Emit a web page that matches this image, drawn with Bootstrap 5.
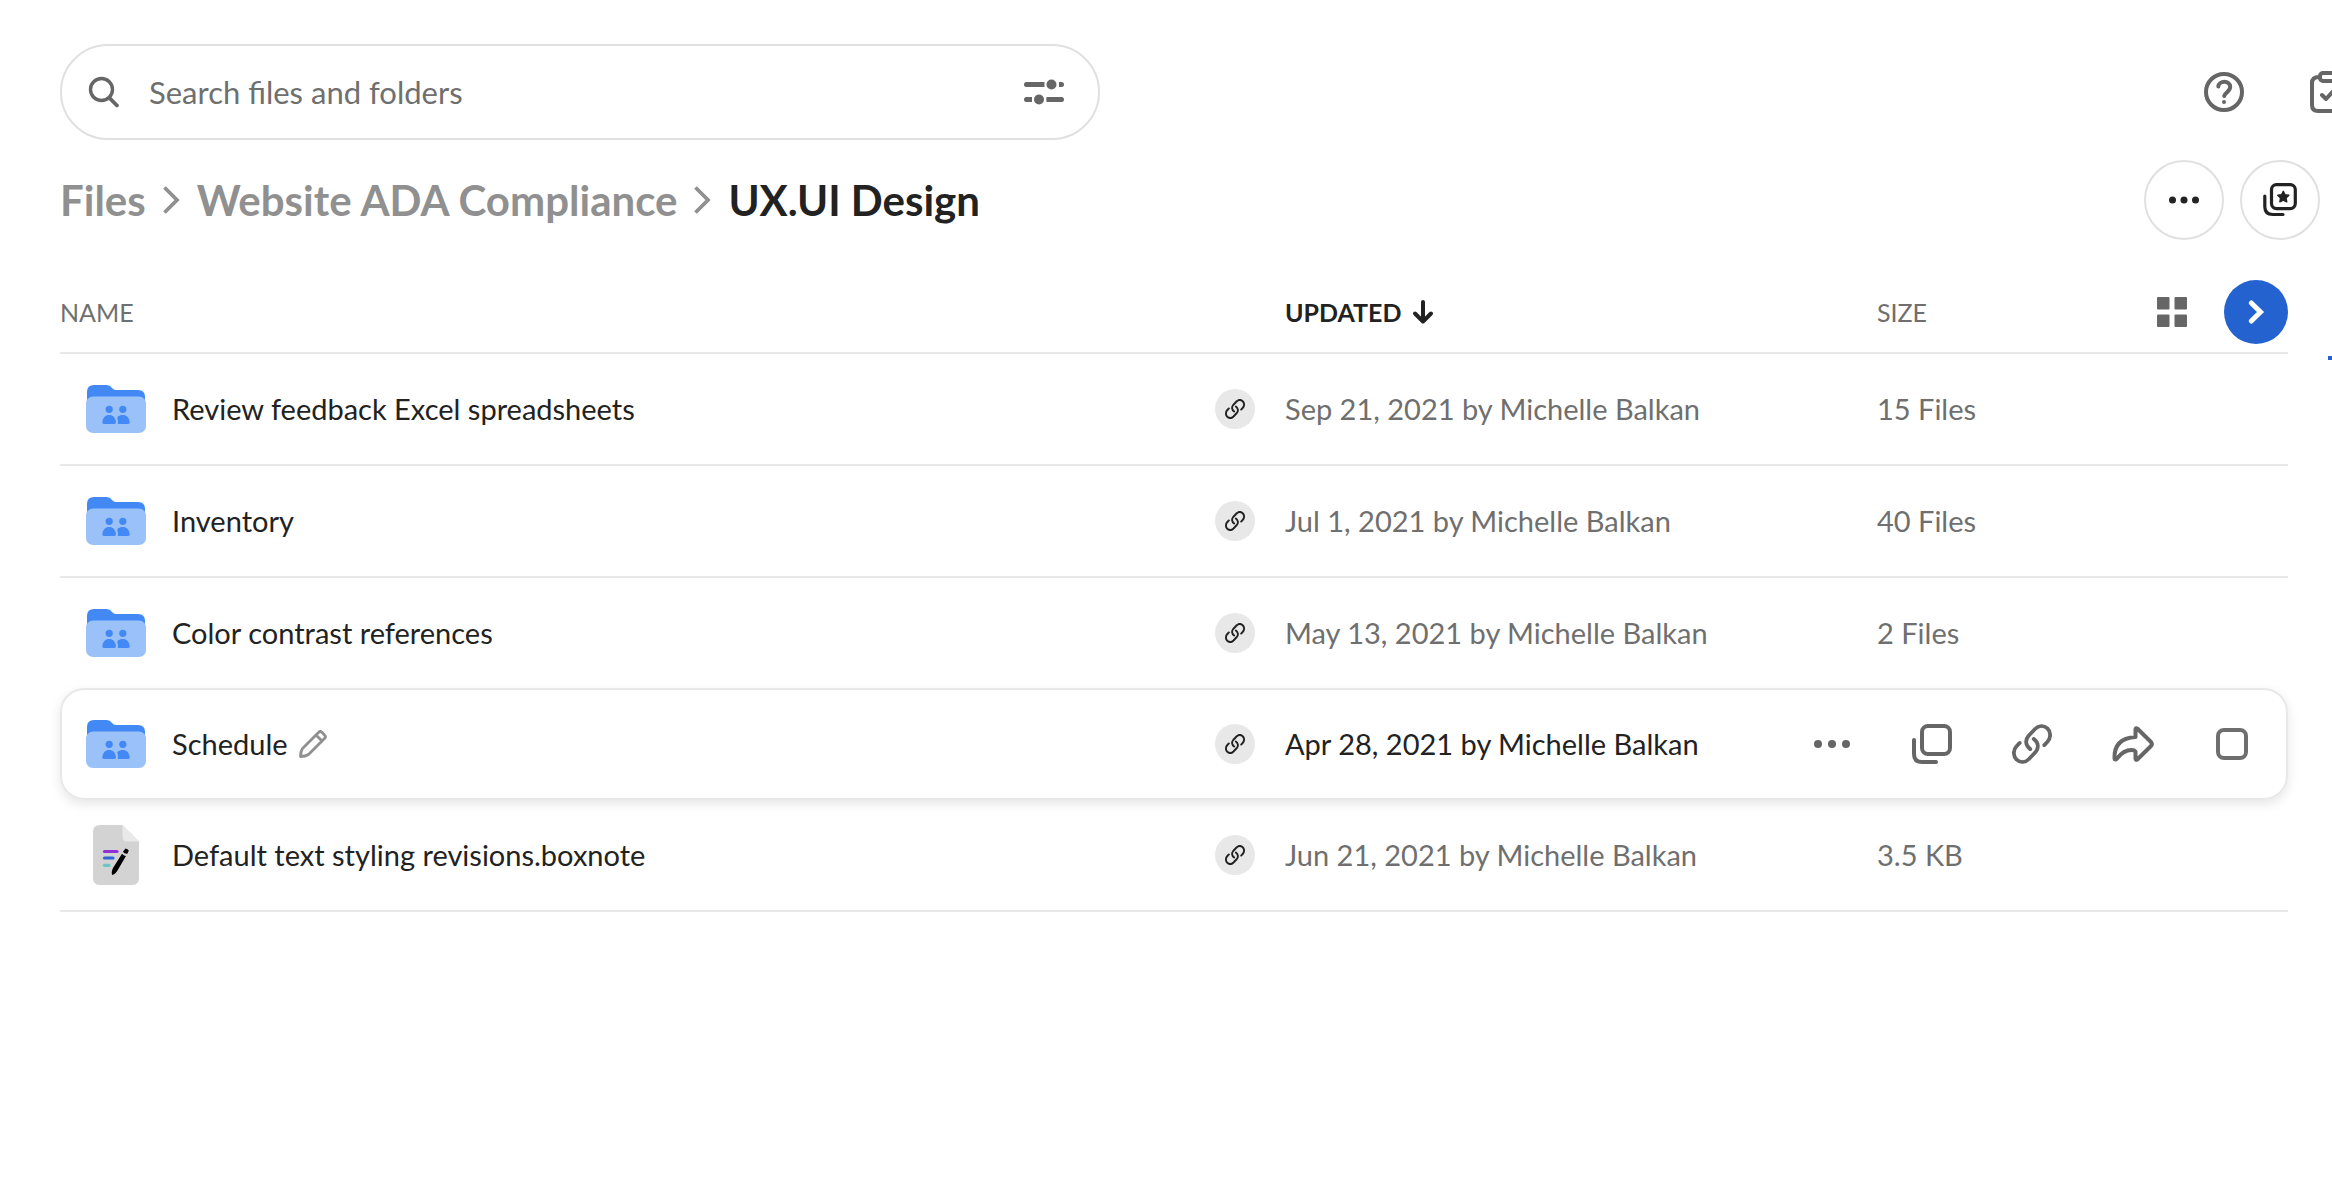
<!DOCTYPE html>
<html lang="en">
<head>
<meta charset="utf-8">
<meta name="viewport" content="width=device-width, initial-scale=1">
<title>UX.UI Design</title>
<link href="https://cdn.jsdelivr.net/npm/bootstrap@5.3.0/dist/css/bootstrap.min.css" rel="stylesheet">
<style>
  :root { --ink: #222; --muted: #6f6f6f; --soft: #909090; --line: #e8e8e8; --brand: #2462cf; }
  body { font-family: Lato, "Liberation Sans", sans-serif; font-size: 29px; line-height: 36px; color: var(--ink); }
  svg { display: block; flex: none; overflow: visible; }
  .btn { --bs-btn-padding-x: 0; --bs-btn-padding-y: 0; --bs-btn-border-width: 0; flex: none; line-height: 1; }
  .app-shell { min-height: 100vh; padding: 44px 44px 0 60px; }
  .search-box { width: 1040px; max-width: 80%; height: 96px; padding: 0 34px 0 27px; gap: 30px; border: 2px solid #e0e0e0; color: #666; }
  .search-box input { font-size: 31px; color: var(--muted); min-width: 0; }
  .search-box input::placeholder { color: var(--muted); opacity: 1; }
  .global-tools { gap: 66px; margin-right: -62px; color: #666; }
  .path-bar { margin: 20px -32px 32px 0; min-height: 80px; }
  .breadcrumb { --bs-breadcrumb-font-size: 42px; font-weight: 700; line-height: 48px; gap: 17px; }
  .breadcrumb a { color: var(--soft); }
  .round-btn { width: 80px; height: 80px; border: 2px solid #e0e0e0; color: var(--ink); }
  .file-table { width: 100%; table-layout: fixed; border-collapse: separate; border-spacing: 0; }
  .file-table th, .file-table td { padding: 0; vertical-align: middle; border-bottom: 2px solid var(--line); }
  .file-table th { height: 82px; font-size: 25px; font-weight: 400; color: var(--muted); }
  .file-table td { height: 112px; color: var(--muted); }
  .file-table a { color: var(--ink); }
  .before-active td { height: 110px; border-bottom: 0; }
  .col-link { width: 86px; } .col-date { width: 494px; } .col-gap { width: 98px; } .col-size { width: 411px; }
  .sort-btn { --bs-btn-font-size: 25px; --bs-btn-font-weight: 700; --bs-btn-color: var(--ink); gap: 12px; }
  .name-cell { padding-left: 26px; gap: 26px; }
  .name-edit { gap: 10px; }
  .icon-slot { width: 60px; }
  .link-dot { width: 40px; height: 40px; margin-left: 16px; background: #e8e8e8; color: var(--ink); }
  .is-active { border-radius: 24px; box-shadow: 0 4px 12px rgba(0, 0, 0, .1); }
  .is-active td { border-top: 2px solid var(--line); color: var(--ink); }
  .is-active td:first-child { border-left: 2px solid var(--line); border-radius: 24px 0 0 24px; }
  .is-active td:last-child { border-right: 2px solid var(--line); border-radius: 0 24px 24px 0; }
  .is-active .name-cell { padding-left: 24px; }
  .row-tools { gap: 60px; padding-right: 38px; color: #666; }
  .row-tools input { appearance: none; width: 32px; height: 32px; margin: 0 0 0 4px; border: 4px solid #6f6f6f; border-radius: 8px; background: #fff; }
  .tool-gap { gap: 37px; }
  .go-btn { width: 64px; height: 64px; background: var(--brand); color: #fff; }
  .panel-edge { top: 356px; right: 0; width: 4px; height: 4px; background: var(--brand); }
</style>
<script src="https://cdn.jsdelivr.net/npm/bootstrap@5.3.0/dist/js/bootstrap.bundle.min.js"></script>
</head>
<body class="bg-white">
<svg class="d-none" aria-hidden="true">
  <symbol id="i-folder" viewBox="0 0 60 48">
    <path fill="#4289f5" d="M1 20V7q0-7 7-7h12q4 0 6 3 1.500 2 4 2h22q7 0 7 7v8z"/>
    <rect y="11.500" width="60" height="36.500" rx="7" fill="#9bc1f9"/>
    <g fill="#4289f5"><circle cx="23.200" cy="24.300" r="3.600"/><circle cx="36.800" cy="24.300" r="3.600"/>
    <path d="M16.300 37C17 32.500 19.500 30 23.200 30S29.300 32.500 30 37q.2 2-1.800 2H18q-2 0-1.700-2zM31.500 31.800C33 30.500 35 30 36.800 30c3.700 0 6.200 2.500 6.900 7q.3 2-1.700 2H32.500q-.8 0-.7-1c.2-2.500.2-3-.6-5z"/></g>
  </symbol>
  <symbol id="i-link" viewBox="0 0 40 40">
    <g fill="none" stroke="currentColor" stroke-width="3.800" stroke-linecap="round">
      <path d="M7.700 18.900 4.700 22C.9 26 1 32.200 4.600 35.600 8.500 39 13.500 38.500 17 35L23.600 28C27 24 26.600 18.500 21.700 14.900"/>
      <path d="M32.300 21.100 35.300 18C39.100 14 39 7.800 35.400 4.400 31.500 1 26.500 1.500 23 5L16.400 12C13 16 13.400 21.500 18.300 25.100"/>
    </g>
  </symbol>
  <symbol id="i-chevron" viewBox="0 0 17 28"><path d="M1.500 1.500 14 14 1.500 26.500" fill="none" stroke="#909090" stroke-width="3.800"/></symbol>
</svg>

<div class="app-shell position-relative overflow-hidden">
  <header class="d-flex align-items-center justify-content-between">
    <form class="search-box d-flex align-items-center rounded-pill" role="search">
      <label for="q" aria-label="Search">
        <svg width="30" height="30" viewBox="0 0 30 30" fill="none" stroke="currentColor"><circle cx="12.500" cy="12.500" r="11" stroke-width="3.400"/><path d="m20.500 21 7.500 7.500" stroke-width="3.800" stroke-linecap="round"/></svg>
      </label>
      <input id="q" class="border-0 bg-transparent p-0 flex-grow-1" type="text" placeholder="Search files and folders">
      <button class="btn" type="button" aria-label="Filters">
        <svg width="40" height="26" viewBox="0 0 40 26" fill="#666"><path stroke="#666" stroke-width="5" stroke-linecap="round" d="M2.500 5.500h15M37.500 5.500h0M2.500 20.500h3M25 20.500h12.500"/><path d="M17 3h3.500v5H17zM35 3h2v5h-2zM5 18h3v5H5zM22.500 18h3v5h-3z"/><circle cx="27.500" cy="5.500" r="5"/><circle cx="15" cy="20.500" r="5"/></svg>
      </button>
    </form>
    <div class="global-tools d-flex">
      <button class="btn text-reset" type="button" aria-label="Help">
        <svg width="40" height="40" viewBox="0 0 40 40" fill="none" stroke="currentColor" stroke-width="4" stroke-linecap="round"><circle cx="20" cy="20" r="18"/><path d="M14.300 14.500c.4-6 11.900-6.500 11.900.3 0 4.700-5 5.500-6 9.200"/><circle cx="20" cy="30" r="2" fill="currentColor" stroke="none"/></svg>
      </button>
      <button class="btn text-reset" type="button" aria-label="Tasks">
        <svg width="40" height="42" viewBox="0 0 40 42" fill="none" stroke="currentColor" stroke-width="4" stroke-linecap="round" stroke-linejoin="round"><path d="M9 6q-7 0-7 6v22q0 6 6 6h24q6 0 6-6V12q0-6-7-6"/><rect x="10" y="2" width="20" height="8" rx="3"/><path d="m12 24 4 4 11-12"/></svg>
      </button>
    </div>
  </header>

  <div class="path-bar d-flex align-items-center justify-content-between">
    <nav aria-label="Breadcrumb">
      <ol class="breadcrumb align-items-center mb-0">
        <li><a class="text-decoration-none" href="#">Files</a></li>
        <li aria-hidden="true"><svg width="17" height="28"><use href="#i-chevron"/></svg></li>
        <li><a class="text-decoration-none" href="#">Website ADA Compliance</a></li>
        <li aria-hidden="true"><svg width="17" height="28"><use href="#i-chevron"/></svg></li>
        <li aria-current="page">UX.UI Design</li>
      </ol>
    </nav>
    <div class="d-flex gap-3">
      <button class="btn round-btn rounded-circle d-flex align-items-center justify-content-center" type="button" aria-label="More options">
        <svg width="30" height="8" viewBox="0 0 30 8" fill="currentColor"><circle cx="3.500" cy="4" r="3.500"/><circle cx="15" cy="4" r="3.500"/><circle cx="26.500" cy="4" r="3.500"/></svg>
      </button>
      <button class="btn round-btn rounded-circle d-flex align-items-center justify-content-center" type="button" aria-label="Add to collections">
        <svg width="34" height="34" viewBox="0 0 34 34" fill="none" stroke="currentColor" stroke-width="3.200" stroke-linecap="round"><rect x="8.500" y="1.600" width="23.800" height="24" rx="5"/><path d="M1.800 13v10.500q0 8 8 8H20"/><path d="m20.300 8.300 1.700 3.500 3.800.5-2.800 2.700.7 3.800-3.400-1.800-3.400 1.800.7-3.800-2.800-2.700 3.800-.5z" fill="currentColor" stroke-width="1.500" stroke-linejoin="round"/></svg>
      </button>
    </div>
  </div>

  <table class="file-table">
    <colgroup><col><col class="col-link"><col class="col-date"><col class="col-gap"><col class="col-size"></colgroup>
    <thead>
      <tr>
        <th scope="col" colspan="2">NAME</th>
        <th scope="col" colspan="2" aria-sort="descending">
          <button class="btn sort-btn d-flex align-items-center" type="button">
            UPDATED
            <svg width="20" height="24" viewBox="0 0 20 24" fill="none" stroke="#222" stroke-width="4" stroke-linecap="round" stroke-linejoin="round"><path d="M10 2v19M2 13.500l8 8 8-8"/></svg>
          </button>
        </th>
        <th scope="col">
          <div class="d-flex align-items-center tool-gap">
            <span class="me-auto">SIZE</span>
            <button class="btn" type="button" aria-label="Grid view"><svg width="30" height="30" viewBox="0 0 30 30" fill="#666"><rect width="12.500" height="12.500" rx="1"/><rect x="17.500" width="12.500" height="12.500" rx="1"/><rect y="17.500" width="12.500" height="12.500" rx="1"/><rect x="17.500" y="17.500" width="12.500" height="12.500" rx="1"/></svg></button>
            <button class="btn go-btn rounded-circle d-flex align-items-center justify-content-center" type="button" aria-label="Show sidebar"><svg width="16" height="24" viewBox="0 0 16 24"><path d="M3.300 3 12.500 12 3.300 21" fill="none" stroke="currentColor" stroke-width="5" stroke-linecap="round"/></svg></button>
          </div>
        </th>
      </tr>
    </thead>
    <tbody>
      <tr>
        <td><div class="name-cell d-flex align-items-center"><svg width="60" height="48"><use href="#i-folder"/></svg><a class="text-decoration-none" href="#">Review feedback Excel spreadsheets</a></div></td>
        <td><button class="btn link-dot rounded-circle d-flex align-items-center justify-content-center" type="button" aria-label="Shared link"><svg width="20" height="20"><use href="#i-link"/></svg></button></td>
        <td colspan="2">Sep 21, 2021 by Michelle Balkan</td>
        <td>15 Files</td>
      </tr>
      <tr>
        <td><div class="name-cell d-flex align-items-center"><svg width="60" height="48"><use href="#i-folder"/></svg><a class="text-decoration-none" href="#">Inventory</a></div></td>
        <td><button class="btn link-dot rounded-circle d-flex align-items-center justify-content-center" type="button" aria-label="Shared link"><svg width="20" height="20"><use href="#i-link"/></svg></button></td>
        <td colspan="2">Jul 1, 2021 by Michelle Balkan</td>
        <td>40 Files</td>
      </tr>
      <tr class="before-active">
        <td><div class="name-cell d-flex align-items-center"><svg width="60" height="48"><use href="#i-folder"/></svg><a class="text-decoration-none" href="#">Color contrast references</a></div></td>
        <td><button class="btn link-dot rounded-circle d-flex align-items-center justify-content-center" type="button" aria-label="Shared link"><svg width="20" height="20"><use href="#i-link"/></svg></button></td>
        <td colspan="2">May 13, 2021 by Michelle Balkan</td>
        <td>2 Files</td>
      </tr>
      <tr class="is-active">
        <td><div class="name-cell d-flex align-items-center"><svg width="60" height="48"><use href="#i-folder"/></svg>
          <div class="name-edit d-flex align-items-center"><a class="text-decoration-none" href="#">Schedule</a>
          <button class="btn" type="button" aria-label="Rename"><svg width="30" height="30" viewBox="0 0 30 30" fill="none" stroke="#909090" stroke-width="2.800" stroke-linejoin="round"><path d="M2.500 27.500c0-3 .7-6 2-8L20.500 3.500q1.800-1.800 3.600 0l2.400 2.400q1.800 1.800 0 3.600L10.500 25.500c-2 1.300-5 2-8 2zM18 6l6 6"/></svg></button></div>
        </div></td>
        <td><button class="btn link-dot rounded-circle d-flex align-items-center justify-content-center" type="button" aria-label="Shared link"><svg width="20" height="20"><use href="#i-link"/></svg></button></td>
        <td>Apr 28, 2021 by Michelle Balkan</td>
        <td colspan="2">
          <div class="row-tools d-flex align-items-center justify-content-end">
            <button class="btn text-reset" type="button" aria-label="More options"><svg width="40" height="40" viewBox="0 0 40 40" fill="currentColor"><circle cx="6" cy="20" r="4"/><circle cx="20" cy="20" r="4"/><circle cx="34" cy="20" r="4"/></svg></button>
            <button class="btn text-reset" type="button" aria-label="Copy"><svg width="40" height="40" viewBox="0 0 40 40" fill="none" stroke="currentColor" stroke-width="4" stroke-linecap="round"><rect x="10" y="2" width="28" height="28" rx="6"/><path d="M2 16v14q0 8 8 8h14"/></svg></button>
            <button class="btn text-reset" type="button" aria-label="Copy link"><svg width="40" height="40"><use href="#i-link"/></svg></button>
            <button class="btn text-reset" type="button" aria-label="Share"><svg width="40" height="40" viewBox="0 0 40 40" fill="none" stroke="currentColor" stroke-width="4" stroke-linejoin="round"><path d="M23.500 5.500q0-2 1.800-1L39 18q1.700 2 0 4L25.300 35.500q-1.800 1-1.800-1v-7q-1-1.500-4-1.500-8 0-14.500 8.500-2 2-2.500 0C2 22 8 14 23.500 13z"/></svg></button>
            <input type="checkbox" aria-label="Select Schedule">
          </div>
        </td>
      </tr>
      <tr>
        <td><div class="name-cell d-flex align-items-center"><span class="icon-slot d-flex justify-content-center"><svg width="46" height="60" viewBox="0 0 46 60"><path fill="#d3d3d3" d="M7 0h22.500L46 16.500V53q0 7-7 7H7q-7 0-7-7V7q0-7 7-7z"/><path fill="#e9e9e9" d="M29.500 0 46 16.500H34q-4.500 0-4.500-4.500z"/><g stroke-width="3.200" stroke-linecap="round"><path stroke="#9031d4" d="M11.500 26.500H24"/><path stroke="#2f63d6" d="M11.500 33h8.500"/><path stroke="#69c8c5" d="M11.500 40.300h4.500"/></g><path d="M29 28.800q2 2.200 4 2.200L24.500 45.500q-2.500 4-5.500 4.500-1-2.500.7-6.500zM32.500 23.500q2.500.3 3.300 2.200l-1.500 3q-3.300.3-4.300-2z"/></svg></span><a class="text-decoration-none" href="#">Default text styling revisions.boxnote</a></div></td>
        <td><button class="btn link-dot rounded-circle d-flex align-items-center justify-content-center" type="button" aria-label="Shared link"><svg width="20" height="20"><use href="#i-link"/></svg></button></td>
        <td colspan="2">Jun 21, 2021 by Michelle Balkan</td>
        <td>3.5 KB</td>
      </tr>
    </tbody>
  </table>
  <span class="panel-edge position-absolute"></span>
</div>
</body>
</html>
